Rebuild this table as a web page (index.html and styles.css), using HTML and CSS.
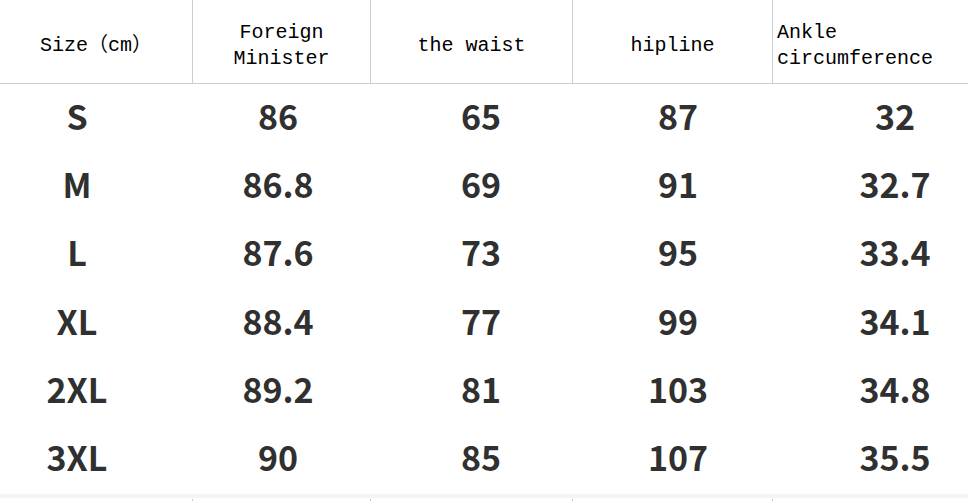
FILE: index.html
```html
<!DOCTYPE html>
<html lang="en">
<head>
<meta charset="utf-8">
<title>Size chart</title>
<link rel="stylesheet" href="styles.css">
</head>
<body>
<div class="chart">
  <div class="head">
    <div class="hcell">Size（cm）</div>
    <div class="hcell">Foreign<br>Minister</div>
    <div class="hcell">the waist</div>
    <div class="hcell">hipline</div>
    <div class="hcell left">Ankle<br>circumference</div>
  </div>
  <div class="body">
    <div class="row"><span class="c0">S</span><span class="c1">86</span><span class="c2">65</span><span class="c3">87</span><span class="c4">32</span></div>
    <div class="row"><span class="c0">M</span><span class="c1">86.8</span><span class="c2">69</span><span class="c3">91</span><span class="c4">32.7</span></div>
    <div class="row"><span class="c0">L</span><span class="c1">87.6</span><span class="c2">73</span><span class="c3">95</span><span class="c4">33.4</span></div>
    <div class="row"><span class="c0">XL</span><span class="c1">88.4</span><span class="c2">77</span><span class="c3">99</span><span class="c4">34.1</span></div>
    <div class="row"><span class="c0">2XL</span><span class="c1">89.2</span><span class="c2">81</span><span class="c3">103</span><span class="c4">34.8</span></div>
    <div class="row"><span class="c0">3XL</span><span class="c1">90</span><span class="c2">85</span><span class="c3">107</span><span class="c4">35.5</span></div>
  </div>
  <div class="band"></div>
  <div class="ticks"><i></i><i></i><i></i><i></i><i></i></div>
</div>
</body>
</html>
```

FILE: styles.css
```css
* { box-sizing: border-box; }
html, body { margin: 0; padding: 0; background: #fff; }
body { width: 968px; height: 501px; overflow: hidden; }

.chart { width: 968px; }

.head {
  display: grid;
  grid-template-columns: 193px 178px 202px 200px 195px;
  height: 84px;
  border-bottom: 1px solid #c9ccd8;
}
.hcell {
  display: flex;
  align-items: center;
  justify-content: center;
  text-align: center;
  padding-top: 9px;
  border-right: 1px solid #c9ccd8;
  font-family: "Liberation Mono", "Noto Sans CJK SC", monospace;
  font-size: 20px;
  line-height: 26px;
  color: #000;
}
.hcell:last-child { border-right: 0; }
.hcell.left { justify-content: flex-start; text-align: left; padding-left: 4px; }

.body { height: 410px; display: grid; grid-template-rows: repeat(6, 1fr); }
.row {
  display: grid;
  grid-template-columns: 193px 178px 202px 200px 195px;
  align-items: center;
  padding-bottom: 6px;
  font-family: "Noto Sans CJK SC", "Noto Sans", sans-serif;
  font-weight: 700;
  font-size: 34px;
  color: #303030;
}
.row span { text-align: center; }
.c0 { padding-right: 39px; }
.c1 { padding-right: 8px; }
.c2 { padding-left: 18px; }
.c3 { padding-left: 10px; }
.c4 { padding-left: 49px; }

.band { height: 4px; background: #f3f3f3; }
.ticks {
  display: grid;
  grid-template-columns: 193px 178px 202px 200px 195px;
  height: 3px;
}
.ticks i { display: block; border-right: 1px solid #c8c8c8; margin-top: 1px; }
.ticks i:last-child { border-right: 0; }
```
